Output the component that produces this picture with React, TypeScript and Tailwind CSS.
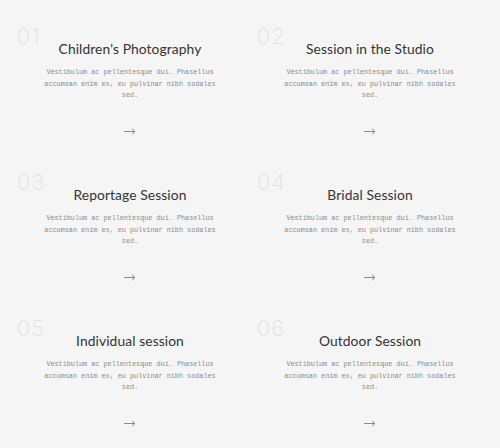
const services = [
  { n: "01", title: "Children's Photography" },
  { n: "02", title: "Session in the Studio" },
  { n: "03", title: "Reportage Session" },
  { n: "04", title: "Bridal Session" },
  { n: "05", title: "Individual session" },
  { n: "06", title: "Outdoor Session" },
];

function Arrow() {
  return (
    <svg width="12" height="7" viewBox="0 0 12 7" fill="none" stroke="#8a8a8a" strokeWidth="1">
      <path d="M0 3.5h11M8 0.8l3 2.7-3 2.7" />
    </svg>
  );
}

export default function App() {
  return (
    <div className="min-h-[448px] w-[500px] bg-[#f5f5f5] px-[10px]">
      <div className="grid grid-cols-2">
        {services.map((s) => (
          <div key={s.n} className="relative flex h-[146px] flex-col items-center pt-[39px]">
            <span className="absolute left-[7px] top-[25px] font-['Inter',sans-serif] text-[22px] font-extralight leading-none tracking-[1px] text-[#e2e2e2]">
              {s.n}
            </span>
            <h3 className="font-['Lato',sans-serif] text-[13.8px] leading-[20px] tracking-[0.1px] text-[#333]">
              {s.title}
            </h3>
            <p className="mt-[8px] max-w-[182px] text-center font-['Liberation_Mono',monospace] text-[6.8px] leading-[11.5px] text-[#8c8c8c]">
              Vestibulum ac pellentesque dui. Phasellus accumsan enim ex, eu pulvinar nibh sodales sed.
            </p>
            <div className="mt-[26px] flex">
              <Arrow />
            </div>
          </div>
        ))}
      </div>
    </div>
  );
}
